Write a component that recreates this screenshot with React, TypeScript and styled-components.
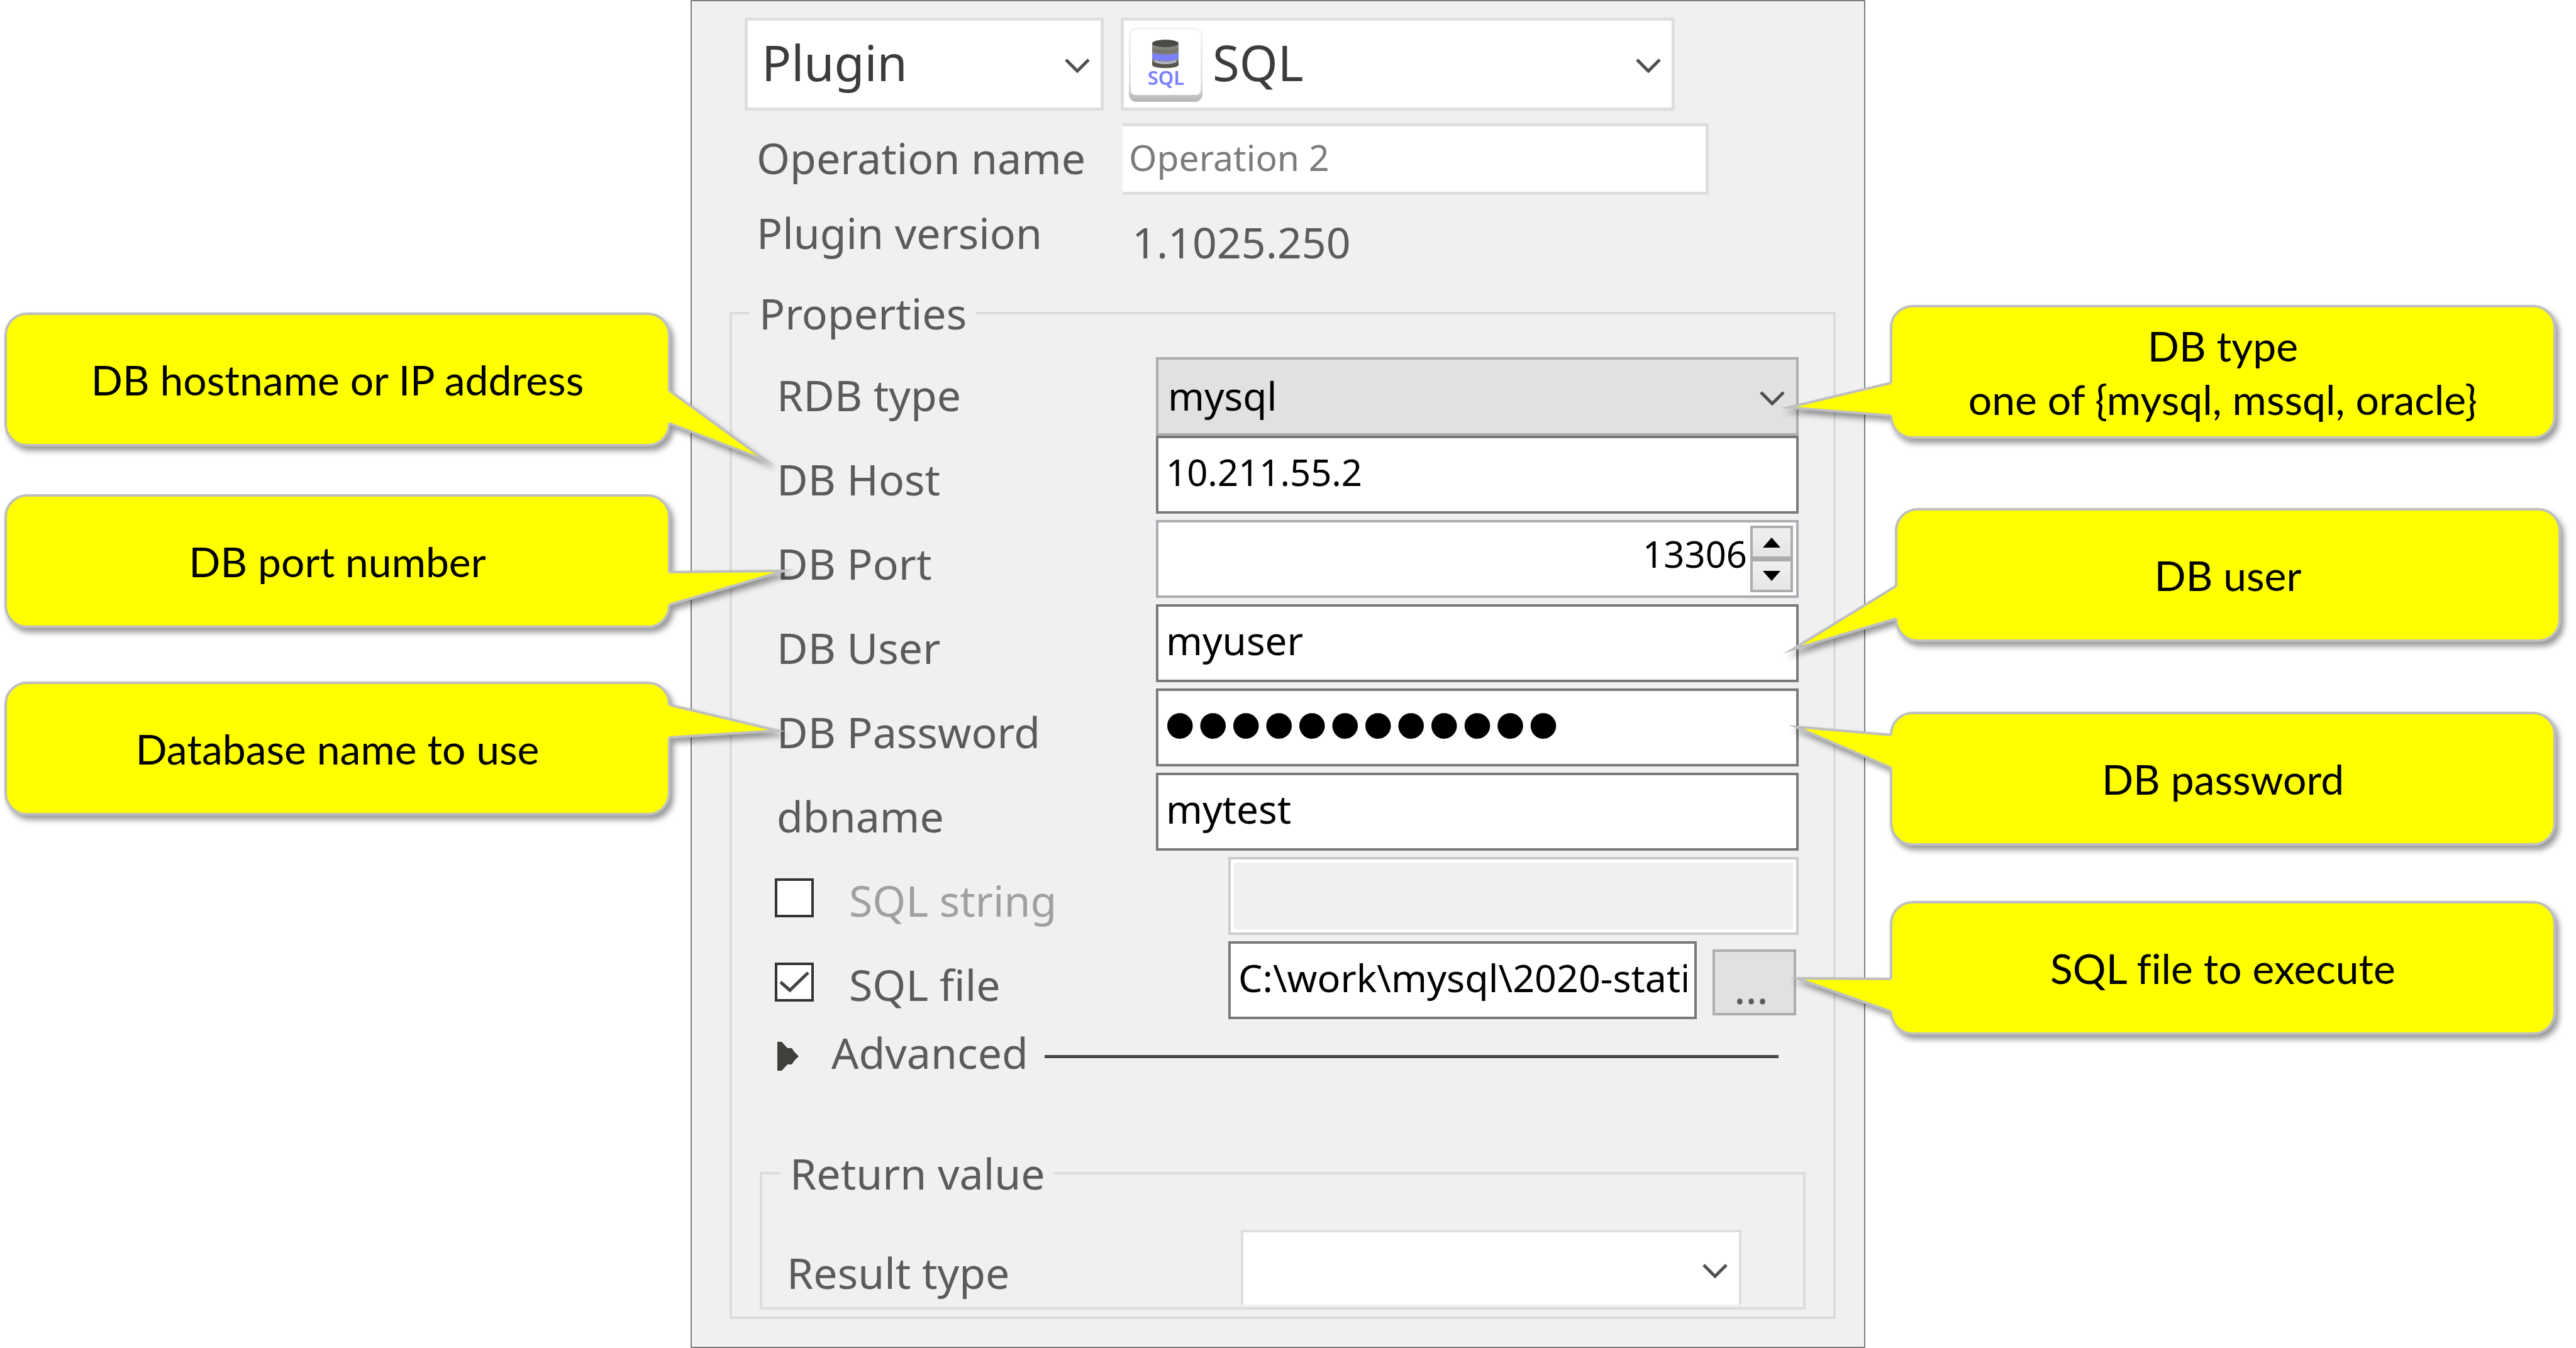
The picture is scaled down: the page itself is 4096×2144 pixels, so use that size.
import React, { useId, useState } from "react";
import styled, { createGlobalStyle, css } from "styled-components";

const GlobalStyle = createGlobalStyle`
  *, *::before, *::after { box-sizing: border-box; }
  body { margin: 0; background: #fff; }
  button, input, select { font: inherit; color: inherit; margin: 0; }
`;

const uiFont = `"Noto Sans", "Open Sans", sans-serif`;

const Page = styled.main`
  display: grid;
  grid-template-columns: 1098fr 1868fr 1130fr;
  align-items: start;
  overflow: hidden;
  font-family: ${uiFont};
  font-size: 68px;
  color: #5b5b5b;
`;

/* ---------- callouts ---------- */

const Notes = styled.aside<{ $side: "left" | "right" }>`
  position: relative;
  z-index: 1;
  display: flex;
  flex-direction: column;
  padding: ${(p) => (p.$side === "left" ? "497px 32px 0 7px" : "485px 32px 0 39px")};
`;

const Note = styled.div<{ $gap?: number; $shift?: number }>`
  position: relative;
  display: flex;
  align-items: center;
  justify-content: center;
  height: 213px;
  margin: ${(p) => `${p.$gap ?? 0}px ${-(p.$shift ?? 0)}px 0 ${p.$shift ?? 0}px`};
  border: 4px solid #bfbfbf;
  border-radius: 36px;
  background: #ff0;
  filter: drop-shadow(5px 7px 5px rgba(0, 0, 0, 0.4));
  font-family: Lato, sans-serif;
  font-size: 66px;
  font-variant-ligatures: none;
  line-height: 85px;
  text-align: center;
  color: #000;
`;

const NoteText = styled.p`
  margin: 0;
  white-space: pre-line;
`;

const Tail = styled.svg<{ $side: "left" | "right" }>`
  position: absolute;
  top: -4px;
  ${(p) => (p.$side === "left" ? "left: 100%;" : "right: 100%;")}
  width: 4px;
  height: 213px;
  overflow: visible;
`;

type NoteData = {
  text: string;
  gap?: number;
  shift?: number;
  from: number;
  to: number;
  tip: [number, number];
};

function Callout({ side, note }: { side: "left" | "right"; note: NoteData }) {
  const dir = side === "left" ? 1 : -1;
  const base = side === "left" ? 0 : 4;
  const x = (n: number) => base + dir * n;
  const [tx, ty] = note.tip;
  return (
    <Note $gap={note.gap} $shift={note.shift}>
      <NoteText>{note.text}</NoteText>
      <Tail $side={side} aria-hidden="true">
        <polygon
          points={`${x(-2)},${note.from} ${x(2)},${note.from} ${x(tx)},${ty} ${x(2)},${note.to} ${x(-2)},${note.to}`}
          fill="#ff0"
        />
        <polyline
          points={`${x(2)},${note.from} ${x(tx)},${ty} ${x(2)},${note.to}`}
          fill="none"
          stroke="#bfbfbf"
          strokeWidth="4"
          strokeMiterlimit="30"
        />
      </Tail>
    </Note>
  );
}

const leftNotes: NoteData[] = [
  { text: "DB hostname or IP address", from: 124, to: 176, tip: [155, 235] },
  { text: "DB port number", gap: 76, from: 124, to: 176, tip: [185, 122] },
  { text: "Database name to use", gap: 85, from: 37, to: 89, tip: [174, 78] },
];

const rightNotes: NoteData[] = [
  { text: "DB type\none of {mysql, mssql, oracle}", from: 124, to: 176, tip: [165, 163] },
  { text: "DB user", gap: 110, shift: 8, from: 124, to: 176, tip: [167, 225] },
  { text: "DB password", gap: 111, from: 37, to: 89, tip: [153, 24] },
  { text: "SQL file to execute", gap: 88, from: 124, to: 176, tip: [152, 123] },
];

/* ---------- panel ---------- */

const Panel = styled.form`
  padding: 26px 0 44px;
  border: 2px solid #7f7f7f;
  background: #f0f0f0;
`;

const TopBar = styled.div`
  display: grid;
  grid-template-columns: 571fr 881fr;
  gap: 27px;
  padding: 0 301px 0 84px;
`;

const SelectBox = styled.div`
  position: relative;
  display: flex;
`;

type SelectKind = "head" | "gray" | "open";

const selectKinds = {
  head: css`
    height: 148px;
    padding: 0 80px 6px 22px;
    border: 5px solid #dedede;
    background: #fff;
    font-size: 78px;
    color: #3c3c3c;
  `,
  gray: css`
    height: 125px;
    margin-top: 9px;
    padding: 0 80px 3px 15px;
    border: 4px solid #adadad;
    background: #e1e1e1;
    font-size: 62px;
    color: #000;
  `,
  open: css`
    height: 119px;
    padding: 0 80px 0 15px;
    border: 4px solid #dedede;
    border-bottom: 0;
    background: #fff;
    font-size: 62px;
  `,
};

const Select = styled.select<{ $kind: SelectKind; $icon?: boolean }>`
  flex: 1;
  min-width: 0;
  appearance: none;
  border-radius: 0;
  ${(p) => selectKinds[p.$kind]}
  ${(p) => p.$icon && "padding-left: 141px;"}
`;

const arrowTops = { head: 65, gray: 63, open: 54 };

const Arrow = styled.svg<{ $kind: SelectKind }>`
  position: absolute;
  right: 22px;
  top: ${(p) => arrowTops[p.$kind]}px;
  width: 40px;
  height: 23px;
  pointer-events: none;
`;

function Chevron({ kind }: { kind: SelectKind }) {
  return (
    <Arrow $kind={kind} viewBox="0 0 40 23" aria-hidden="true">
      <path d="M2 2 20 20 38 2" fill="none" stroke="#505050" strokeWidth="5" />
    </Arrow>
  );
}

const PluginIcon = styled.svg`
  position: absolute;
  left: 12px;
  top: 15px;
  width: 119px;
  height: 120px;
  pointer-events: none;
`;

function SqlIcon() {
  return (
    <PluginIcon viewBox="0 0 119 120" aria-hidden="true">
      <defs>
        <linearGradient id="tileEdge" x1="0" y1="0" x2="0" y2="1">
          <stop offset="0" stopColor="#f3f3f3" />
          <stop offset="0.75" stopColor="#e0e0e0" />
          <stop offset="1" stopColor="#b4b4b4" />
        </linearGradient>
      </defs>
      <rect x="1" y="1" width="117" height="118" rx="12" fill="url(#tileEdge)" />
      <rect x="4" y="4" width="111" height="104" rx="7" fill="#fff" />
      <path d="M38 26v34c0 6 42 6 42 0V26z" fill="#85857f" />
      <path d="M38 32c4 6 38 6 42 0v6c-4 6-38 6-42 0z" fill="#77776f" />
      <ellipse cx="59" cy="26" rx="21" ry="6" fill="#4a4a44" />
      <path d="M38 41c8 4 34 4 42 0v9c-8 5-34 5-42 0z" fill="#7b80ff" />
      <path d="M42 52c8 4 26 4 34 0v5c-8 3-26 3-34 0z" fill="#b4b5c4" />
      <path d="M38 53c6 8 36 8 42 0v7c0 7-42 7-42 0z" fill="#55554c" />
      <text
        x="60"
        y="92"
        textAnchor="middle"
        fontFamily="Noto Sans, sans-serif"
        fontSize="31"
        fontWeight="600"
        fill="#7b80ff"
      >
        SQL
      </text>
    </PluginIcon>
  );
}

const InfoRow = styled.div<{ $first?: boolean }>`
  display: grid;
  grid-template-columns: 582fr 932fr;
  margin-top: ${(p) => (p.$first ? 20 : 0)}px;
  padding: 0 247px 0 103px;
`;

const NameLabel = styled.label`
  padding-bottom: 5px;
  line-height: 109px;
`;

const NameInput = styled.input`
  width: 100%;
  height: 114px;
  padding: 0 10px 7px;
  border: 5px solid #dedede;
  border-left: 0;
  border-radius: 0;
  background: #fff;
  font-size: 57px;
  color: #7c7c7c;
`;

const VersionLabel = styled.span`
  line-height: 120px;
`;

const VersionValue = styled.output`
  padding: 30px 0 0 15px;
  line-height: 90px;
`;

const Group = styled.fieldset<{ $inner?: boolean }>`
  min-width: 0;
  margin: ${(p) => (p.$inner ? "104px 44px 0" : "22px 45px 0 60px")};
  padding: ${(p) => (p.$inner ? "44px 98px 4px 39px" : "15px 0 11px")};
  border: 4px solid #dcdcdc;
`;

const Legend = styled.legend<{ $inner?: boolean }>`
  margin-left: ${(p) => (p.$inner ? -10 : 28)}px;
  padding: 0 14px 0 15px;
  line-height: 92px;
`;

const Row = styled.div<{ $wide?: boolean }>`
  display: grid;
  grid-template-columns: ${(p) => (p.$wide ? "718px" : "603px")} 1fr;
  align-items: start;
  height: 134px;
  padding: 0 55px 0 71px;
`;

const RowLabel = styled.label`
  padding-top: 3px;
  line-height: 131px;
`;

const TextInput = styled.input<{ $size: number }>`
  width: 100%;
  min-width: 0;
  height: 124px;
  padding: 0 12px 10px;
  border: 4px solid #7a7a7a;
  border-radius: 0;
  background: #fff;
  font-size: ${(p) => p.$size}px;
  color: #000;

  &:disabled {
    border-color: #ccc;
    background: #f0f0f0;
    box-shadow: inset 0 0 0 5px #fff;
  }
`;

const PasswordInput = styled(TextInput)`
  padding: 0 8px 10px;
  font-family: "Liberation Sans", Arial, sans-serif;
  line-height: 106px;
`;

const Stepper = styled.div`
  display: flex;
  height: 124px;
  border: 4px solid #abadb3;
  background: #fff;
`;

const NumberInput = styled.input`
  flex: 1;
  min-width: 0;
  padding: 0 5px 18px 12px;
  border: 0;
  background: transparent;
  font-size: 58px;
  text-align: right;
  color: #000;
  appearance: textfield;

  &::-webkit-inner-spin-button,
  &::-webkit-outer-spin-button {
    appearance: none;
    margin: 0;
  }
`;

const StepButtons = styled.div`
  display: flex;
  flex-direction: column;
  width: 68px;
  margin: 5px 5px 5px 0;
`;

const StepButton = styled.button`
  display: grid;
  place-items: center;
  flex: 1;
  padding: 0;
  border: 4px solid #acacac;
  background: linear-gradient(#f0f0f0, #e5e5e5);
`;

const StepIcon = styled.svg`
  width: 28px;
  height: 16px;
`;

const CheckLabel = styled.label<{ $off?: boolean }>`
  display: flex;
  align-items: center;
  gap: 56px;
  margin-left: -3px;
  padding-top: 3px;
  line-height: 131px;
  ${(p) => p.$off && "color: #a0a0a0;"}
`;

const Tick = styled.span`
  position: relative;
  display: grid;
  width: 62px;
  height: 62px;
  margin-bottom: 8px;
`;

const TickInput = styled.input`
  appearance: none;
  width: 62px;
  height: 62px;
  border: 4px solid #333;
  background: #fff;

  &:not(:checked) + svg {
    display: none;
  }
`;

const TickMark = styled.svg`
  position: absolute;
  inset: 0;
  width: 62px;
  height: 62px;
  pointer-events: none;
`;

const FileField = styled.div`
  display: flex;
  gap: 25px;
  padding-right: 4px;
`;

const BrowseButton = styled.button`
  flex: none;
  width: 133px;
  height: 105px;
  margin-top: 13px;
  padding: 8px 10px 0 0;
  border: 4px solid #adadad;
  background: #e1e1e1;
  line-height: 97px;
  color: #5b5b5b;
`;

const AdvancedRow = styled.div`
  display: flex;
  align-items: center;
  gap: 26px;
  height: 85px;
  padding: 0 87px 0 72px;
`;

const AdvancedButton = styled.button`
  display: flex;
  align-items: center;
  gap: 52px;
  padding: 0;
  border: 0;
  background: none;
  line-height: 85px;
`;

const Triangle = styled.svg`
  width: 34px;
  height: 46px;
  margin-top: 12px;
`;

const Rule = styled.hr`
  flex: 1;
  height: 5px;
  margin: 13px 0 0;
  border: 0;
  background: #474747;
`;

const ResultRow = styled.div`
  display: grid;
  grid-template-columns: 722px 1fr;
`;

const ResultLabel = styled.label`
  padding-top: 16px;
  line-height: 103px;
`;

function CheckBox({ id, checked, onChange }: { id: string; checked: boolean; onChange: (v: boolean) => void }) {
  return (
    <Tick>
      <TickInput id={id} type="checkbox" checked={checked} onChange={(e) => onChange(e.target.checked)} />
      <TickMark viewBox="0 0 62 62" aria-hidden="true">
        <path d="M9 31 24 44 53 16" fill="none" stroke="#444" strokeWidth="5" />
      </TickMark>
    </Tick>
  );
}

export default function App() {
  const uid = useId();
  const id = (name: string) => `${uid}-${name}`;
  const [port, setPort] = useState(13306);
  const [useString, setUseString] = useState(false);
  const [useFile, setUseFile] = useState(true);

  return (
    <>
      <GlobalStyle />
      <Page>
        <Notes $side="left">
          {leftNotes.map((n) => (
            <Callout key={n.text} side="left" note={n} />
          ))}
        </Notes>

        <Panel onSubmit={(e) => e.preventDefault()}>
          <TopBar>
            <SelectBox>
              <Select $kind="head" aria-label="Operation category" defaultValue="Plugin">
                <option>Plugin</option>
              </Select>
              <Chevron kind="head" />
            </SelectBox>
            <SelectBox>
              <Select $kind="head" $icon aria-label="Plugin" defaultValue="SQL">
                <option>SQL</option>
              </Select>
              <SqlIcon />
              <Chevron kind="head" />
            </SelectBox>
          </TopBar>

          <InfoRow $first>
            <NameLabel htmlFor={id("name")}>Operation name</NameLabel>
            <NameInput id={id("name")} defaultValue="Operation 2" />
          </InfoRow>
          <InfoRow>
            <VersionLabel>Plugin version</VersionLabel>
            <VersionValue>1.1025.250</VersionValue>
          </InfoRow>

          <Group>
            <Legend>Properties</Legend>
            <Row>
              <RowLabel htmlFor={id("type")}>RDB type</RowLabel>
              <SelectBox>
                <Select id={id("type")} $kind="gray" defaultValue="mysql">
                  <option>mysql</option>
                  <option>mssql</option>
                  <option>oracle</option>
                </Select>
                <Chevron kind="gray" />
              </SelectBox>
            </Row>
            <Row>
              <RowLabel htmlFor={id("host")}>DB Host</RowLabel>
              <TextInput id={id("host")} $size={58} defaultValue="10.211.55.2" />
            </Row>
            <Row>
              <RowLabel htmlFor={id("port")}>DB Port</RowLabel>
              <Stepper>
                <NumberInput
                  id={id("port")}
                  type="number"
                  value={port}
                  onChange={(e) => setPort(Number(e.target.value))}
                />
                <StepButtons>
                  <StepButton type="button" aria-label="Increase port" onClick={() => setPort(port + 1)}>
                    <StepIcon viewBox="0 0 28 16" aria-hidden="true">
                      <path d="M14 0 28 16H0z" fill="#000" />
                    </StepIcon>
                  </StepButton>
                  <StepButton type="button" aria-label="Decrease port" onClick={() => setPort(port - 1)}>
                    <StepIcon viewBox="0 0 28 16" aria-hidden="true">
                      <path d="M14 16 28 0H0z" fill="#000" />
                    </StepIcon>
                  </StepButton>
                </StepButtons>
              </Stepper>
            </Row>
            <Row>
              <RowLabel htmlFor={id("user")}>DB User</RowLabel>
              <TextInput id={id("user")} $size={62} defaultValue="myuser" />
            </Row>
            <Row>
              <RowLabel htmlFor={id("pass")}>DB Password</RowLabel>
              <PasswordInput id={id("pass")} type="password" $size={150} defaultValue="mypassword12" />
            </Row>
            <Row>
              <RowLabel htmlFor={id("dbname")}>dbname</RowLabel>
              <TextInput id={id("dbname")} $size={62} defaultValue="mytest" />
            </Row>
            <Row $wide>
              <CheckLabel $off={!useString}>
                <CheckBox id={id("useString")} checked={useString} onChange={setUseString} />
                SQL string
              </CheckLabel>
              <TextInput aria-label="SQL string" $size={62} disabled={!useString} />
            </Row>
            <Row $wide>
              <CheckLabel $off={!useFile}>
                <CheckBox id={id("useFile")} checked={useFile} onChange={setUseFile} />
                SQL file
              </CheckLabel>
              <FileField>
                <TextInput aria-label="SQL file" $size={61} defaultValue="C:\work\mysql\2020-stati" />
                <BrowseButton type="button">...</BrowseButton>
              </FileField>
            </Row>
            <AdvancedRow>
              <AdvancedButton type="button" aria-expanded="false">
                <Triangle viewBox="0 0 34 46" aria-hidden="true">
                  <path d="M0 0h7l9 10h7l4 6 7 7-7 7-4 6h-7L7 46H0z" fill="#3f3f3b" />
                </Triangle>
                Advanced
              </AdvancedButton>
              <Rule />
            </AdvancedRow>

            <Group $inner>
              <Legend $inner>Return value</Legend>
              <ResultRow>
                <ResultLabel htmlFor={id("result")}>Result type</ResultLabel>
                <SelectBox>
                  <Select id={id("result")} $kind="open" defaultValue="">
                    <option value="" aria-label="None" />
                  </Select>
                  <Chevron kind="open" />
                </SelectBox>
              </ResultRow>
            </Group>
          </Group>
        </Panel>

        <Notes $side="right">
          {rightNotes.map((n) => (
            <Callout key={n.text} side="right" note={n} />
          ))}
        </Notes>
      </Page>
    </>
  );
}
